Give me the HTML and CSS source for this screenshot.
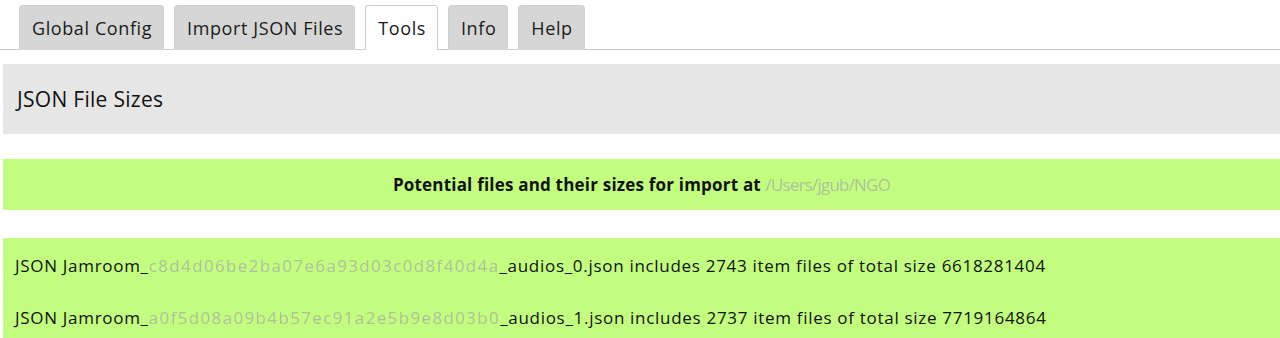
FILE: index.html
```html
<!DOCTYPE html>
<html lang="en">
    <head>
        <meta charset="UTF-8">
        <title>JSON File Sizes</title>
        <link rel="stylesheet" href="styles.css">
    </head>
    <body>
        <ul class="tabs">
            <li class="tab">Global Config</li>
            <li class="tab">Import JSON Files</li>
            <li class="tab active">Tools</li>
            <li class="tab">Info</li>
            <li class="tab">Help</li>
        </ul>
        <div class="content">
            <div class="panel-title">JSON File Sizes</div>
            <div class="notice">
                Potential files and their sizes for import at <span class="masked short">/Users/jgub/NGO</span>
            </div>
            <div class="file-list">
                <div class="file-row">JSON Jamroom_<span class="masked">c8d4d06be2ba07e6a93d03c0d8f40d4a</span>_audios_0.json includes 2743 item files of total size 6618281404</div>
                <div class="file-row">JSON Jamroom_<span class="masked">a0f5d08a09b4b57ec91a2e5b9e8d03b0</span>_audios_1.json includes 2737 item files of total size 7719164864</div>
            </div>
        </div>
    </body>
</html>
```

FILE: styles.css
```css
* {
    margin: 0;
    padding: 0;
    box-sizing: border-box;
}

body {
    font-family: 'Open Sans', Lato, sans-serif;
    color: #111;
    background: white;
}

.tabs {
    list-style: none;
    display: flex;
    gap: 10px;
    padding: 5px 0 0 19px;
    border-bottom: 1px solid #ccc;
    height: 50px;
}

.tab {
    height: 45px;
    padding: 0 11px 0 12px;
    font-size: 18px;
    letter-spacing: 0.6px;
    line-height: 44px;
    background: #d6d6d6;
    border: 1px solid #d0d0d0;
    border-bottom: none;
    border-radius: 4px 4px 0 0;
    color: #1a1a1a;
}

.tab.active {
    background: white;
    border-color: #ccc;
}

.content {
    padding: 14px 0 0 3px;
}

.panel-title {
    background: #e6e6e6;
    height: 70px;
    padding-left: 14px;
    font-size: 21px;
    letter-spacing: 0.3px;
    line-height: 70px;
}

.notice {
    margin-top: 25px;
    background: #c2fd7f;
    height: 51px;
    line-height: 51px;
    text-align: center;
    font-weight: bold;
    font-size: 17px;
    letter-spacing: 0.2px;
}

.file-list {
    margin-top: 28px;
    background: #c2fd7f;
    padding: 15px 12px 20px;
}

.file-row {
    font-size: 17px;
    letter-spacing: 0.7px;
    line-height: 26px;
    margin-bottom: 26px;
}

/* anonymised parts of the paths */
.masked {
    color: #aebf9c;
    filter: blur(0.7px);
    font-weight: normal;
    letter-spacing: 1.35px;
}

.masked.short {
    letter-spacing: -0.8px;
}
```
